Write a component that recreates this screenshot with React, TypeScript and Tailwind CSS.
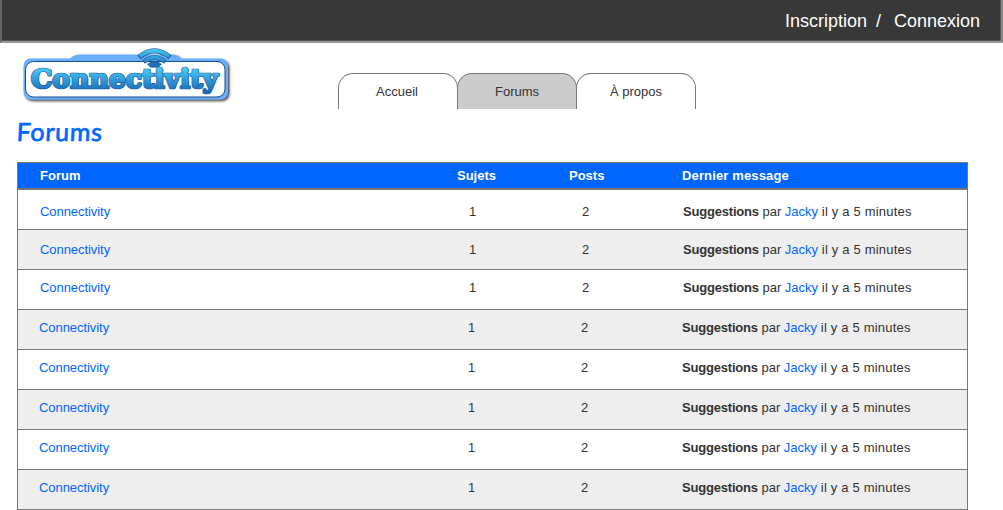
import React from 'react';

const rows = [
  'pt-[5px] pl-[22px]',
  'pt-px pl-[22px]',
  'pb-[3px] pl-[22px]',
  'pb-[3px] pl-[21px]',
  'pb-[3px] pl-[21px]',
  'pb-[3px] pl-[21px]',
  'pb-[3px] pl-[21px]',
  'pb-[3px] pl-[21px]',
];

function Logo() {
  return (
    <svg width="214" height="60" viewBox="20 45 214 60" role="img" aria-label="Connectivity">
      <defs>
        <linearGradient id="ink" x1="0" y1="67" x2="0" y2="92" gradientUnits="userSpaceOnUse">
          <stop offset="0" stopColor="#4ed2fa" />
          <stop offset="1" stopColor="#1767b8" />
        </linearGradient>
        <linearGradient id="waves" x1="0" y1="49" x2="0" y2="70" gradientUnits="userSpaceOnUse">
          <stop offset="0" stopColor="#46c8f5" />
          <stop offset="1" stopColor="#1560b2" />
        </linearGradient>
        <filter id="shadow" x="-5%" y="-10%" width="112%" height="130%">
          <feDropShadow dx="1.5" dy="1.6" stdDeviation="0.8" floodColor="#222" floodOpacity="0.85" />
        </filter>
      </defs>
      <g filter="url(#shadow)">
        <path
          d="M31 58.5H70Q74 54.5 79 54.5H173Q178 54.5 181 58.5H220Q228 58.5 228 67V91Q228 99.5 220 99.5H32Q23.5 99.5 23.5 91V67Q23.5 58.5 31 58.5Z"
          fill="#6baefa"
        />
      </g>
      <rect x="25.5" y="61.5" width="199.5" height="35.5" rx="8" fill="#fff" stroke="#174d88" />
      <g fill="none">
        <path d="M139 57.2Q154.5 44.6 170 57.2" stroke="#1c5c99" strokeWidth="5.2" />
        <path d="M139.7 56.6Q154.5 45 169.3 56.6" stroke="url(#waves)" strokeWidth="3.8" />
        <path d="M143.5 62Q154.5 53.2 165.5 62" stroke="#1c5c99" strokeWidth="4.6" />
        <path d="M144.1 61.5Q154.5 53.7 164.9 61.5" stroke="url(#waves)" strokeWidth="3.4" />
      </g>
      <path d="M147.6 64.2Q154.5 58.5 161.4 64.2L158.5 67.2H150.5Z" fill="#1b6fc0" stroke="#174d88" strokeWidth=".6" />
      <text
        x="31"
        y="87.8"
        textLength="187"
        lengthAdjust="spacingAndGlyphs"
        fill="#205a98"
        stroke="#205a98"
        strokeWidth="2.6"
        strokeLinejoin="round"
        className="font-['DejaVu_Serif',serif] text-[26px] font-bold"
      >
        Connectivity
      </text>
      <text
        x="31"
        y="87.8"
        textLength="187"
        lengthAdjust="spacingAndGlyphs"
        fill="url(#ink)"
        stroke="url(#ink)"
        strokeWidth="1.3"
        strokeLinejoin="round"
        aria-hidden="true"
        className="font-['DejaVu_Serif',serif] text-[26px] font-bold"
      >
        Connectivity
      </text>
    </svg>
  );
}

export default function App() {
  return (
    <div className="h-[510px] w-[1003px] overflow-hidden bg-white font-['Liberation_Sans',Arial,sans-serif] text-[13px] text-[#333]">
      <header className="flex h-[43px] items-center justify-end border-2 border-t-0 border-[#999] border-r-[#888] border-l-[#666] bg-[#383838] pt-[2px] pr-[21px] text-[18px] text-white shadow-[inset_-1px_-1px_0_#555]">
        <a>Inscription</a>
        <span className="ml-[9px]">/</span>
        <a className="ml-[13px]">Connexion</a>
      </header>

      <div className="flex h-[66px] pl-5">
        <div className="w-[318px] pt-[2px]">
          <Logo />
        </div>
        <nav className="flex pt-[30px]">
          <a className="flex h-9 w-[120px] justify-center rounded-t-[15px] border border-b-0 border-[#777] pt-[10px] pr-[2px] leading-4">
            Accueil
          </a>
          <a className="-ml-px flex h-9 w-[120px] justify-center rounded-t-[15px] border border-b-0 border-[#777] bg-[#ccc] pt-[10px] leading-4">
            Forums
          </a>
          <a className="-ml-px flex h-9 w-[120px] justify-center rounded-t-[15px] border border-b-0 border-[#777] pt-[10px] leading-4">
            À propos
          </a>
        </nav>
      </div>

      <h1 className="h-[53px] origin-top-left -skew-x-3 pt-[6px] pl-[18px] font-[Lato,sans-serif] text-[25px] leading-8 font-normal tracking-[0.7px] text-[#0066ff] [-webkit-text-stroke:0.7px_#0066ff]">
        Forums
      </h1>

      <main className="ml-[17px] w-[951px] border border-b-0 border-[#777]">
        <div className="flex h-[27px] items-center border-b-2 border-[#777] bg-[#0066ff] pl-[22px] font-bold text-white">
          <span className="w-[417px]">Forum</span>
          <span className="w-[112px]">Sujets</span>
          <span className="w-[113px]">Posts</span>
          <span className="tracking-[0.14px]">Dernier message</span>
        </div>
        {rows.map((spacing, i) => (
          <div
            key={i}
            className={`flex h-10 items-center border-b border-[#777] ${i % 2 ? 'bg-[#eee]' : 'bg-white'} ${spacing}`}
          >
            <a className="w-[429px] tracking-[-0.06px] text-[#0066ff]">Connectivity</a>
            <span className="w-[113px]">1</span>
            <span className="w-[101px]">2</span>
            <span className="whitespace-pre">
              <b className="tracking-[-0.2px]">Suggestions</b> par <a className="text-[#0066ff]">Jacky</a>
              <span className="tracking-[0.19px]"> il y a 5 minutes</span>
            </span>
          </div>
        ))}
      </main>
    </div>
  );
}
